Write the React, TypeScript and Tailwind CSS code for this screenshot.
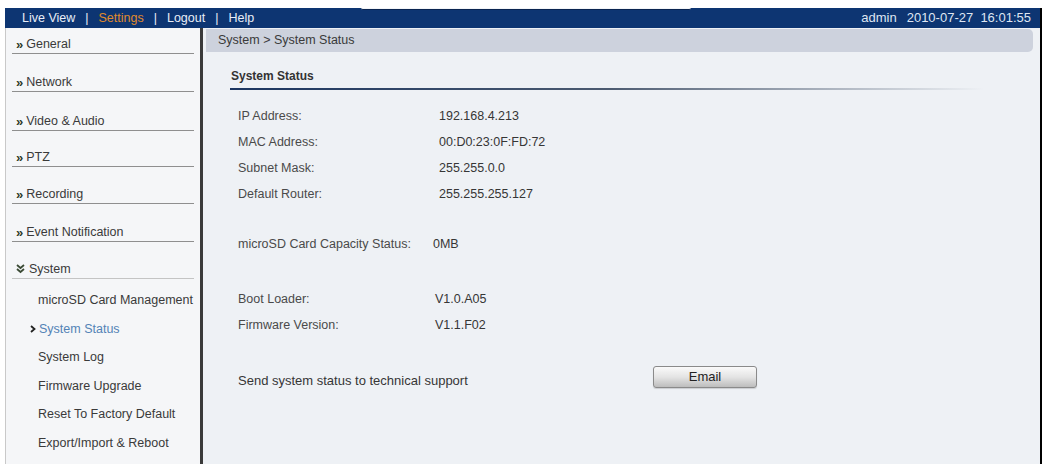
import React from 'react'

const font = { fontFamily: '"Liberation Sans", Arial, sans-serif' }

const menu = [
  { label: 'General', h: 'h-[26px]' },
  { label: 'Network', h: 'h-[38px]' },
  { label: 'Video & Audio', h: 'h-[39px]' },
  { label: 'PTZ', h: 'h-[36px]' },
  { label: 'Recording', h: 'h-[37px]' },
  { label: 'Event Notification', h: 'h-[38px]' },
]

const subItems = [
  'microSD Card Management',
  'System Status',
  'System Log',
  'Firmware Upgrade',
  'Reset To Factory Default',
  'Export/Import & Reboot',
]

function Chevrons() {
  return <span className="mr-[4px] text-[13px] font-bold leading-none text-[#2c3a26] tracking-[-1px]">»</span>
}

function DownChevrons() {
  return (
    <svg width="9" height="10" viewBox="0 0 9 10" className="mr-[4px]">
      <path d="M1 1 L4.5 4 L8 1 M1 5 L4.5 8 L8 5" stroke="#3a4a34" strokeWidth="1.8" fill="none" />
    </svg>
  )
}

function Sidebar() {
  return (
    <div className="w-[198px] shrink-0 bg-[#f5f6f8] border-l border-[#c9c9c9] border-r-[3px] border-r-[#3a3a3a] text-[12.5px] text-[#3a3a3a]">
      {menu.map((m) => (
        <div key={m.label} className={`mx-[6px] ${m.h} border-b border-[#8f8f8f] flex items-end pb-[2px] pl-[4px]`}>
          <div className="flex items-center leading-[14px]">
            <Chevrons />
            {m.label}
          </div>
        </div>
      ))}
      <div className="mx-[6px] h-[37px] border-b border-[#c4c4c4] flex items-end pb-[2px] pl-[4px]">
        <div className="flex items-center leading-[14px]">
          <DownChevrons />
          System
        </div>
      </div>
      <div className="pt-[7px]">
        {subItems.map((s) => (
          <div key={s} className="h-[28.5px] flex items-center pl-[32px] leading-[14px]">
            {s === 'System Status' ? (
              <span className="flex items-center -ml-[8px] text-[#5383b6]">
                <svg width="6" height="8" viewBox="0 0 6 8" className="mr-[3px]">
                  <path d="M1 1 L4.5 4 L1 7" stroke="#222" strokeWidth="1.8" fill="none" />
                </svg>
                {s}
              </span>
            ) : (
              s
            )}
          </div>
        ))}
      </div>
    </div>
  )
}

function Row({ label, value, w = 'w-[201px]' }: { label: string; value: string; w?: string }) {
  return (
    <div className="h-[26px] flex items-center">
      <div className={`${w} text-[#4a4a4a]`}>{label}</div>
      <div className="text-[#363636]">{value}</div>
    </div>
  )
}

export default function App() {
  return (
    <div className="w-[1048px] h-[468px] bg-white overflow-hidden" style={font}>
      <div className="ml-[5px] mt-[8px] w-[1037px] h-[456px] border-r-[2px] border-black flex flex-col">
        {/* top bar */}
        <div className="relative h-[20px] bg-[#0d3572] flex items-center justify-between pl-[17px] pr-[9px] text-[12.5px] text-[#e9eef7]">
          <div className="absolute left-[356px] top-0 w-[330px] h-[2px] bg-[#f2f4f7] rounded-b-[4px] border-b border-[#0a2450]" />
          <div className="flex items-center gap-[10px]">
            <span>Live View</span>
            <span>|</span>
            <span className="text-[#e08a2c]">Settings</span>
            <span>|</span>
            <span>Logout</span>
            <span>|</span>
            <span>Help</span>
          </div>
          <div className="flex items-center gap-[10px] text-[13px] text-[#dfe6f2]">
            <span>admin</span>
            <span>2010-07-27&nbsp;&nbsp;16:01:55</span>
          </div>
        </div>

        <div className="flex flex-1">
          <Sidebar />
          {/* content */}
          <div className="flex-1 bg-[#eef1f5] text-[12.5px]">
            <div className="mt-[1px] ml-[3px] mr-[7px] h-[23px] bg-[#cdd2dd] rounded-r-[5px] flex items-center pl-[12px] text-[#3a3a3a]">
              System &gt; System Status
            </div>
            <div className="pl-[27px] pt-[17px]">
              <div className="font-bold text-[12px] text-[#333] leading-[14px] pl-[1px]">System Status</div>
              <div className="mt-[5px] h-[2px] w-[754px] bg-gradient-to-r from-[#1b3560] via-[#4b5a70] to-transparent" />
              <div className="pl-[8px] pt-[13px]">
                <Row label="IP Address:" value="192.168.4.213" />
                <Row label="MAC Address:" value="00:D0:23:0F:FD:72" />
                <Row label="Subnet Mask:" value="255.255.0.0" />
                <Row label="Default Router:" value="255.255.255.127" />
                <div className="h-[24px]" />
                <Row label="microSD Card Capacity Status:" value="0MB" w="w-[195px]" />
                <div className="h-[29px]" />
                <Row label="Boot Loader:" value="V1.0.A05" w="w-[197px]" />
                <Row label="Firmware Version:" value="V1.1.F02" w="w-[197px]" />
                <div className="h-[28px]" />
                <div className="flex items-start">
                  <div className="w-[415px] mt-[8px] leading-[14px] text-[13px] text-[#363636]">Send system status to technical support</div>
                  <button className="w-[104px] h-[22px] rounded-[3px] border border-[#8a8a8a] bg-gradient-to-b from-[#fafafa] via-[#e4e4e4] to-[#bdbdbd] text-[13px] text-[#222] shadow-[0_1px_1px_rgba(0,0,0,0.15)]">
                    Email
                  </button>
                </div>
              </div>
            </div>
          </div>
        </div>
      </div>
    </div>
  )
}
